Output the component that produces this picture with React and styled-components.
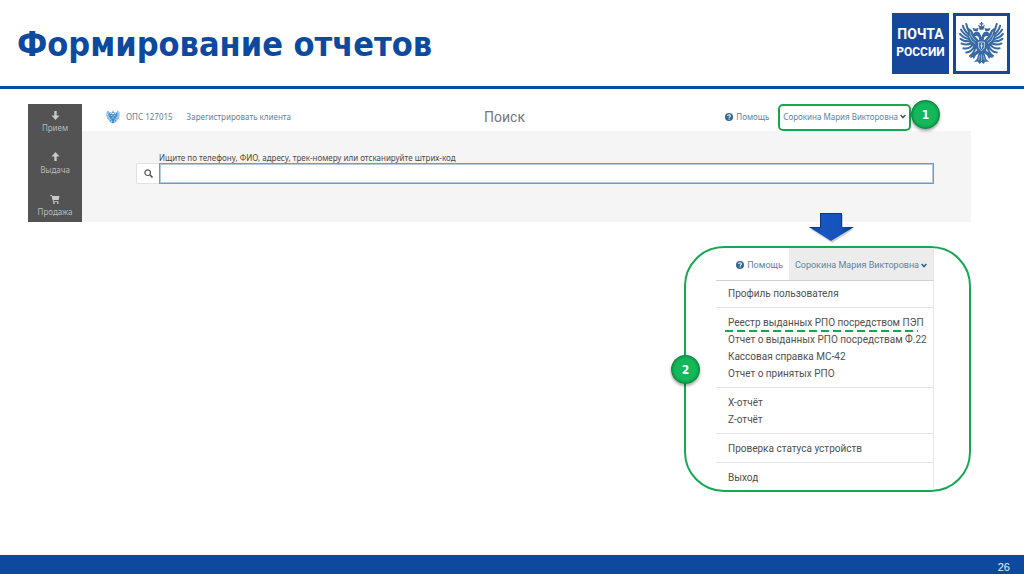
import React from "react";
import styled, { createGlobalStyle } from "styled-components";

const BLUE = "#0d4a9f";
const GREEN = "#14a851";
const LINK = "#5b84a3";

const GlobalStyle = createGlobalStyle`
  *, *::before, *::after { box-sizing: border-box; }
  body { margin: 0; background: #fff; font-family: "Noto Sans", Roboto, sans-serif; }
  button, input { font: inherit; margin: 0; }
  ul { list-style: none; margin: 0; padding: 0; }
`;

const Slide = styled.div`
  min-height: 100vh;
  display: flex;
  flex-direction: column;
`;

const Header = styled.header`
  min-height: 89px;
  display: flex;
  align-items: center;
  justify-content: space-between;
  padding: 0 14px 0 17px;
  border-bottom: 3px solid ${BLUE};
`;

const Title = styled.h1`
  margin: 0;
  padding-top: 2px;
  color: ${BLUE};
  font: bold 34px/44px "DejaVu Sans Condensed", "DejaVu Sans", sans-serif;
`;

const Logo = styled.div`
  display: flex;
  gap: 4px;
`;

const LogoTile = styled.div`
  width: 57px;
  height: 61px;
  display: flex;
  flex-direction: column;
  align-items: center;
  justify-content: center;
  background: ${(p) => (p.$outlined ? "#fff" : "#15489a")};
  border: 3px solid #15489a;
`;

const LogoWord = styled.span`
  color: #fff;
  font: bold ${(p) => p.$size}px/18px Roboto, sans-serif;
`;

const Main = styled.main`
  flex: 1;
  padding: 15px 53px 20px 28px;
`;

const AppShot = styled.section`
  display: flex;
  min-height: 118px;
`;

const Sidebar = styled.nav`
  width: 54px;
  display: flex;
  flex-direction: column;
  gap: 18px;
  padding: 6px 0 4px;
  background: #535353;
`;

const SideLink = styled.a`
  display: flex;
  flex-direction: column;
  align-items: center;
  gap: 2px;
  color: #b9b9b9;
  font-size: 8px;
  line-height: 12px;
  text-decoration: none;
`;

const Workspace = styled.div`
  flex: 1;
  display: flex;
  flex-direction: column;
`;

const TopBar = styled.div`
  display: grid;
  grid-template-columns: 1fr auto 1fr;
  align-items: center;
  height: 27px;
  padding: 0 60px 2px 24px;
`;

const BarGroup = styled.div`
  display: flex;
  align-items: center;
  gap: ${(p) => p.$gap}px;
  justify-content: ${(p) => (p.$end ? "flex-end" : "flex-start")};
`;

const BarLink = styled.a`
  display: inline-flex;
  align-items: center;
  gap: ${(p) => p.$gap || 3}px;
  color: ${LINK};
  font-size: ${(p) => (p.$large ? 9 : 8)}px;
  font-family: ${(p) => (p.$large ? "Roboto, sans-serif" : "inherit")};
  line-height: 12px;
  text-decoration: none;
  white-space: nowrap;
`;

const PageName = styled.h2`
  margin: 0;
  padding-right: 8px;
  color: #777;
  font: 400 14px/20px Roboto, sans-serif;
`;

const UserButton = styled.button`
  display: inline-flex;
  align-items: center;
  gap: 2px;
  padding: 0;
  border: 0;
  background: none;
  color: ${LINK};
  font-size: ${(p) => (p.$large ? 9 : 8)}px;
  font-family: ${(p) => (p.$large ? "Roboto, sans-serif" : "inherit")};
  line-height: 12px;
  white-space: nowrap;
`;

const Callout = styled.div`
  position: relative;
  height: 27px;
  display: flex;
  align-items: center;
  margin-bottom: -2px;
  padding: 0 3px 2px;
  border: 2px solid ${GREEN};
  border-radius: 5px;
`;

const Badge = styled.span`
  position: absolute;
  width: 29px;
  height: 29px;
  display: flex;
  align-items: center;
  justify-content: center;
  border-radius: 50%;
  background: radial-gradient(circle closest-side, #12b85a 0 72%, #0fa850 86%, #0a8039 100%);
  box-shadow: 0 2px 3px rgba(0, 0, 0, 0.35);
  color: #fff;
  font: bold 12px/14px "DejaVu Sans Condensed", "DejaVu Sans", sans-serif;
`;

const BarBadge = styled(Badge)`
  left: calc(100% + 2px);
  top: -6px;
`;

const PanelBadge = styled(Badge)`
  right: 100%;
  top: 50%;
  margin: -14px -14px 0 0;
`;

const SearchArea = styled.form`
  flex: 1;
  display: grid;
  grid-template-columns: 23px 1fr;
  align-content: start;
  padding: 21px 37px 0 54px;
  background: #f5f5f5;
`;

const SearchLabel = styled.label`
  grid-column: 2;
  color: #4a4a4a;
  font-size: 8px;
  line-height: 11px;
`;

const SearchButton = styled.button`
  display: flex;
  align-items: center;
  justify-content: center;
  padding: 0;
  border: 1px solid #e2e2e2;
  border-right: 0;
  border-radius: 2px 0 0 2px;
  background: #fff;
`;

const SearchInput = styled.input`
  width: 100%;
  height: 21px;
  padding: 0 6px;
  border: 1px solid #6c9cc4;
  outline: 1px solid #b4cbdf;
  outline-offset: -2px;
  background: #fff;
  font-size: 9px;
`;

const Flow = styled.section`
  display: flex;
  flex-direction: column;
  align-items: flex-end;
`;

const ArrowSlot = styled.div`
  width: 280px;
  height: 24px;
  display: flex;
  align-items: flex-end;
  justify-content: center;
  padding-bottom: 2px;
  svg { flex: none; }
`;

const MenuPanel = styled.div`
  position: relative;
  width: 287px;
  padding: 0 35px 0 30px;
  border: 2px solid ${GREEN};
  border-radius: 40px;
`;

const Menu = styled.div`
  height: 242px;
  overflow: hidden;
  border-right: 1px solid #e8e8e8;
`;

const MenuHead = styled.div`
  height: 33px;
  display: flex;
  justify-content: flex-end;
  border-bottom: 1px solid #d2d2d2;
`;

const MenuTab = styled.div`
  display: flex;
  align-items: center;
  padding: 2px 6px 0;
  background: ${(p) => (p.$active ? "#ececec" : "transparent")};
`;

const MenuGroup = styled.ul`
  padding: ${(p) => (p.$tight ? 4 : 6)}px 0 5px 12px;
  border-bottom: 1px solid #e4e4e4;
`;

const MenuItem = styled.li`
  position: relative;
  display: flex;
`;

const MenuLink = styled.a`
  color: #505050;
  font: 10px/17px Roboto, sans-serif;
  text-decoration: none;
  white-space: nowrap;
`;

const DashMark = styled.span`
  position: absolute;
  left: -3px;
  bottom: -1px;
  width: 193px;
  height: 2px;
  background: repeating-linear-gradient(90deg, ${GREEN} 0 8px, transparent 8px 12px);
`;

const Footer = styled.footer`
  height: 19px;
  display: flex;
  align-items: center;
  justify-content: flex-end;
  padding: 4px 14px 0 0;
  background: ${BLUE};
  color: #e8effa;
  font: 11px/14px "Liberation Sans", Arial, sans-serif;
`;

function Wing({ color }) {
  return (
    <g>
      <g fill="none" stroke={color} strokeLinecap="round" strokeWidth="2.1">
        <path d="M13 13Q9 8 8 2M12 14Q6 10 4.500 4M12 16Q5 13 2.500 8M12 18Q5 17 1.500 12.500M13 20Q6 21 2 17.500M14 22Q8 25 3 22.500M15 24Q10 29 5 27.500M17 25Q13 32 8 32M18 26Q16 33 12 35.500" />
      </g>
      <path d="M10 6Q15 8 16 14L22 20L20 27Q12 26 10 17Z" fill={color} />
      <path d="M12 10Q13 17 20 21M11 14Q12 20 19 24" fill="none" stroke="#fff" strokeWidth="0.7" opacity="0.8" />
    </g>
  );
}

function Eagle({ width, height, color }) {
  return (
    <svg width={width} height={height} viewBox="0 0 48 44" fill={color} aria-hidden="true">
      <Wing color={color} />
      <g transform="translate(48 0) scale(-1 1)">
        <Wing color={color} />
      </g>
      <path d="M24 0V5M22 2H26" stroke={color} strokeWidth="1.2" />
      <path d="M20.500 3L22 8H26L27.500 3L25 4.500H23ZM14.500 6L16 9.500H20L21 6L18 7ZM27 6L28 9.500H32L33.500 6L30 7Z" />
      <path d="M21.500 21C22 17 21 15 19 14.500C17 15.500 15 14.500 14 13C16 13 16 10 19 10C22 10 23 13 24 16C25 13 26 10 29 10C32 10 32 13 34 13C33 14.500 31 15.500 29 14.500C27 15 26 17 26.500 21Z" />
      <path d="M18 19H30C32 25 29 31 24 34C19 31 16 25 18 19Z" />
      <path d="M21 21H27V26C27 28 25 29 24 30C23 29 21 28 21 26Z" fill="none" stroke="#fff" strokeWidth="0.7" />
      <path d="M24 22V28M22.500 25H25.500" stroke="#fff" strokeWidth="0.7" />
      <path d="M20 29L14 34L12 38L15 37L16 39L18 35L22 32ZM28 29L34 34L36 38L33 37L32 39L30 35L26 32Z" />
      <path d="M21.500 31H26.500L29 39L32 42L28 41.500L26 44L24 42L22 44L20 41.500L16 42L19 39Z" />
      <path d="M24 34V41M22 35L21 40M26 35L27 40" stroke="#fff" strokeWidth="0.5" />
    </svg>
  );
}

function ArrowIcon({ up }) {
  return (
    <svg width="9" height="10" viewBox="0 0 9 10" fill="#c9c9c9" aria-hidden="true">
      <path d={up ? "M4.5 0L8.500 4.500H5.700V9H3.300V4.500H.5Z" : "M3.300 1H5.700V5.500H8.500L4.500 10L.5 5.500H3.300Z"} />
    </svg>
  );
}

function CartIcon() {
  return (
    <svg width="10" height="10" viewBox="0 0 10 10" fill="#c9c9c9" aria-hidden="true">
      <path d="M0 1H2L2.400 2H9.500L8.600 6H3.600L3.800 7H8.500V7.800H3L1.500 1.800H0Z" />
      <circle cx="4" cy="9" r="0.9" />
      <circle cx="7.800" cy="9" r="0.9" />
    </svg>
  );
}

function HelpIcon() {
  return (
    <svg width="8" height="8" viewBox="0 0 16 16" aria-hidden="true">
      <circle cx="8" cy="8" r="8" fill="#34688f" />
      <path d="M5.300 6C5.300 2.800 10.800 2.800 10.800 6C10.800 8 8.200 7.800 8.200 10" fill="none" stroke="#fff" strokeWidth="2.1" />
      <rect x="7.100" y="11.200" width="2.200" height="2.100" fill="#fff" />
    </svg>
  );
}

function Chevron() {
  return (
    <svg width="6" height="5" viewBox="0 0 6 5" fill="none" stroke="#34607f" strokeWidth="1.5" aria-hidden="true">
      <path d="M0.600 1L3 3.600L5.400 1" />
    </svg>
  );
}

function SearchIcon() {
  return (
    <svg width="9" height="9" viewBox="0 0 9 9" fill="none" stroke="#555" aria-hidden="true">
      <circle cx="3.700" cy="3.700" r="2.800" strokeWidth="1.2" />
      <path d="M5.800 5.800L8.500 8.500" strokeWidth="1.6" />
    </svg>
  );
}

function DownArrow() {
  return (
    <svg width="47" height="32" viewBox="0 0 47 32" aria-hidden="true">
      <defs>
        <linearGradient id="arrowFill" x1="0" x2="1" y1="0" y2="0">
          <stop offset="0" stopColor="#0d3f95" />
          <stop offset="0.3" stopColor="#1857c0" />
          <stop offset="0.7" stopColor="#1552bb" />
          <stop offset="1" stopColor="#08337f" />
        </linearGradient>
      </defs>
      <path d="M13 3H35V17H46L24 31L2 17H13Z" fill="#000" opacity="0.18" />
      <path d="M12 1H34V15H46L23 29L1 15H12Z" fill="url(#arrowFill)" />
      <path d="M12 1H34V15H33V2H13V16H3L1 15H12Z" fill="#0a3789" />
    </svg>
  );
}

const SIDE = [
  { label: "Прием", icon: <ArrowIcon /> },
  { label: "Выдача", icon: <ArrowIcon up /> },
  { label: "Продажа", icon: <CartIcon /> },
];

const MENU = [
  ["Профиль пользователя"],
  [
    "Реестр выданных РПО посредством ПЭП",
    "Отчет о выданных РПО посредствам Ф.22",
    "Кассовая справка МС-42",
    "Отчет о принятых РПО",
  ],
  ["X-отчёт", "Z-отчёт"],
  ["Проверка статуса устройств"],
  ["Выход"],
];

function HelpLink({ large }) {
  return (
    <BarLink href="#help" $large={large}>
      <HelpIcon />
      Помощь
    </BarLink>
  );
}

function User({ large }) {
  return (
    <UserButton type="button" $large={large}>
      Сорокина Мария Викторовна
      <Chevron />
    </UserButton>
  );
}

export default function App() {
  return (
    <Slide>
      <GlobalStyle />
      <Header>
        <Title>Формирование отчетов</Title>
        <Logo>
          <LogoTile>
            <LogoWord $size={14}>ПОЧТА</LogoWord>
            <LogoWord $size={12}>РОССИИ</LogoWord>
          </LogoTile>
          <LogoTile $outlined>
            <Eagle width={47} height={42} color="#3769a3" />
          </LogoTile>
        </Logo>
      </Header>

      <Main>
        <AppShot>
          <Sidebar>
            {SIDE.map((s) => (
              <SideLink key={s.label} href="#section">
                {s.icon}
                {s.label}
              </SideLink>
            ))}
          </Sidebar>
          <Workspace>
            <TopBar>
              <BarGroup $gap={14}>
                <BarLink href="#office" $gap={6}>
                  <Eagle width={14} height={14} color="#2f84cf" />
                  ОПС 127015
                </BarLink>
                <BarLink href="#register">Зарегистрировать клиента</BarLink>
              </BarGroup>
              <PageName>Поиск</PageName>
              <BarGroup $gap={9} $end>
                <HelpLink />
                <Callout>
                  <User />
                  <BarBadge>1</BarBadge>
                </Callout>
              </BarGroup>
            </TopBar>
            <SearchArea onSubmit={(e) => e.preventDefault()}>
              <SearchLabel htmlFor="query">
                Ищите по телефону, ФИО, адресу, трек-номеру или отсканируйте штрих-код
              </SearchLabel>
              <SearchButton type="submit" aria-label="Найти">
                <SearchIcon />
              </SearchButton>
              <SearchInput id="query" type="text" />
            </SearchArea>
          </Workspace>
        </AppShot>

        <Flow>
          <ArrowSlot>
            <DownArrow />
          </ArrowSlot>
          <MenuPanel>
            <PanelBadge>2</PanelBadge>
            <Menu>
              <MenuHead>
                <MenuTab>
                  <HelpLink large />
                </MenuTab>
                <MenuTab $active>
                  <User large />
                </MenuTab>
              </MenuHead>
              {MENU.map((group, g) => (
                <MenuGroup key={group[0]} $tight={g === 0}>
                  {group.map((item, i) => (
                    <MenuItem key={item}>
                      <MenuLink href="#report">{item}</MenuLink>
                      {g === 1 && i === 0 && <DashMark />}
                    </MenuItem>
                  ))}
                </MenuGroup>
              ))}
            </Menu>
          </MenuPanel>
        </Flow>
      </Main>

      <Footer>26</Footer>
    </Slide>
  );
}
